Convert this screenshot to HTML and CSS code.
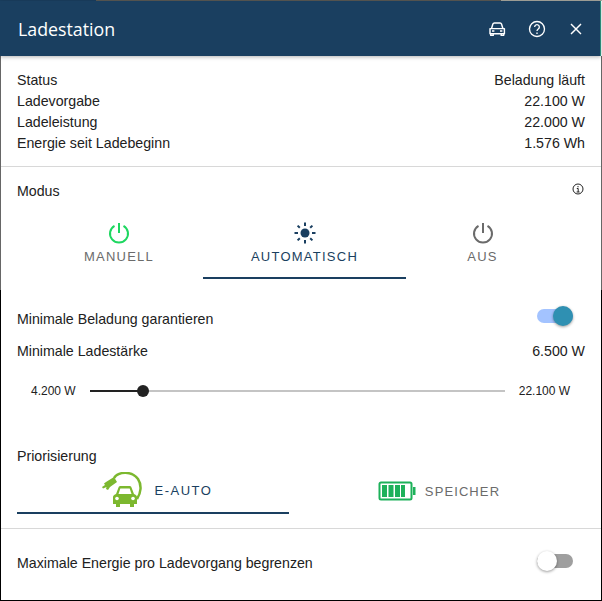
FILE: index.html
```html
<!DOCTYPE html>
<html lang="de">
<head>
    <meta charset="UTF-8">
    <title>Ladestation</title>
    <link rel="stylesheet" href="styles.css">
</head>
<body>
    <div class="topline"></div>
    <div class="dialog">
        <header class="titlebar">
            <h1>Ladestation</h1>
            <div class="actions">
                <svg width="20" height="20" viewBox="0.500 -0.500 25 25" fill="none" stroke="#fff" stroke-width="1.800"><path d="M5 11l1.600-5.200C6.900 5 7.500 4.500 8.400 4.500h7.200c.9 0 1.500.5 1.800 1.300L19 11"/><path d="M3 11.500h18v6.500H3z" stroke-linejoin="round"/><path d="M4 18v2h3v-2M17 18v2h3v-2"/><path d="M5.500 14.500h3M15.500 14.500h3" stroke-width="2"/></svg>
                <svg width="20" height="20" viewBox="0 0 24 24" fill="none" stroke="#fff" stroke-width="1.600"><circle cx="12" cy="12" r="9"/><path d="M9.200 9.600a2.800 2.800 0 1 1 4.300 2.400c-1 .7-1.500 1.200-1.500 2.300"/><path d="M12 16.200v1.800"/></svg>
                <svg width="20" height="20" viewBox="0 0 24 24" fill="none" stroke="#fff" stroke-width="1.700"><path d="M6 6l12 12M18 6L6 18"/></svg>
            </div>
        </header>

        <section class="infos">
            <div class="row"><span>Status</span><span>Beladung läuft</span></div>
            <div class="row"><span>Ladevorgabe</span><span>22.100 W</span></div>
            <div class="row"><span>Ladeleistung</span><span>22.000 W</span></div>
            <div class="row"><span>Energie seit Ladebeginn</span><span>1.576 Wh</span></div>
        </section>

        <section class="modus">
            <div class="row modus-head">
                <span>Modus</span>
                <svg class="info-icon" width="12" height="12" viewBox="0 0 12 12" fill="none" stroke="#222"><circle cx="6" cy="6" r="5"/><path d="M6 3v1.300M4.800 5.500H6.200V9M4.600 9h3"/></svg>
            </div>
            <div class="tabs">
                <div class="tab">
                    <svg width="24" height="24" viewBox="0 0 24 24" fill="none" stroke="#1ed760" stroke-width="2"><path d="M12 2v10"/><path d="M7.500 4.800a9 9 0 1 0 9 0"/></svg>
                    <span>MANUELL</span>
                </div>
                <div class="tab active">
                    <svg width="24" height="24" viewBox="0 0 24 24" fill="none" stroke="#1a3f60" stroke-width="2"><circle cx="12" cy="12" r="4.500" fill="#1a3f60" stroke="none"/><path d="M12 1.500v3.500M12 19v3.500M1.500 12h3.500M19 12h3.500M4.600 4.600l2.200 2.200M17.200 17.200l2.200 2.200M4.600 19.400l2.200-2.200M17.200 6.800l2.200-2.200"/></svg>
                    <span>AUTOMATISCH</span>
                </div>
                <div class="tab">
                    <svg width="24" height="24" viewBox="0 0 24 24" fill="none" stroke="#6b6b6b" stroke-width="2"><path d="M12 2v10"/><path d="M7.500 4.800a9 9 0 1 0 9 0"/></svg>
                    <span>AUS</span>
                </div>
            </div>

            <div class="row minimal">
                <span>Minimale Beladung garantieren</span>
                <div class="switch on"><i></i></div>
            </div>
            <div class="row staerke"><span>Minimale Ladestärke</span><span>6.500 W</span></div>
            <div class="slider-row">
                <span>4.200 W</span>
                <div class="slider"><div class="slider-fill"></div><div class="slider-thumb"></div></div>
                <span>22.100 W</span>
            </div>

            <div class="prio-label">Priorisierung</div>
            <div class="prio-tabs">
                <div class="prio active">
                    <svg width="40" height="36" viewBox="0 0 40 36">
                        <path d="M12 6C17-1 30-1 36 7c4 6 3 14-1 20" fill="none" stroke="#7cb82f" stroke-width="2.500"/>
                        <path d="M3 8l8-5 3 5-7 5-2 3-2-1 .500-2-3.500 1.500-1-1.500 3-2-1-1.500z" fill="#7cb82f" transform="translate(1 2)"/>
                        <path d="M14 22l2.500-6.500c.3-1 1-1.500 2-1.500h9c1 0 1.700.5 2 1.500L32 22c1.500.5 3 1.500 3 3v7h-3v3h-4v-3H18v3h-4v-3h-3v-7c0-1.500 1.500-2.500 3-3z" fill="#7cb82f"/>
                        <path d="M16.500 22l1.800-5.500h9.400l1.800 5.500z" fill="#fff"/>
                        <circle cx="15" cy="26.500" r="1.800" fill="#fff"/><circle cx="31" cy="26.500" r="1.800" fill="#fff"/>
                    </svg>
                    <span>E-AUTO</span>
                </div>
                <div class="prio">
                    <svg width="38" height="20" viewBox="0 0 38 20" fill="#1db15a">
                        <path d="M3 1.500h29A1.500 1.500 0 0 1 33.500 3v14a1.500 1.500 0 0 1-1.500 1.500H3A1.500 1.500 0 0 1 1.500 17V3A1.500 1.500 0 0 1 3 1.500z" fill="none" stroke="#1db15a" stroke-width="2"/>
                        <path d="M4 4h5v12H4zM10.500 4h5v12h-5zM17 4h5v12h-5zM23 4h4v12h-4zM35 6h2.500v8H35z"/>
                    </svg>
                    <span>SPEICHER</span>
                </div>
            </div>
        </section>

        <section class="limit">
            <span>Maximale Energie pro Ladevorgang begrenzen</span>
            <div class="switch"><i></i></div>
        </section>
    </div>
</body>
</html>
```

FILE: styles.css
```css
:root {
    --blue: #1a3f60;
    --text: #212121;
    --grey: #6b6b6b;
    --line: #d8d8d8;
}

html, body {
    margin: 0;
    height: 100%;
}

body {
    /* window edge behind the dialog */
    background: linear-gradient(to bottom, #fff 56px, #666 56px, #666 290px, #000 290px);
    font-family: "Liberation Sans", Arial, sans-serif;
    font-size: 14.200px;
    color: var(--text);
}

.topline {
    height: 1px;
    background: linear-gradient(to right, var(--blue) 96px, #5a5a55 96px, #5a5a55 501px, #a8a8a0 501px);
}

.dialog {
    width: 600px;
    margin-left: 1px;
    height: 599px;
    background-color: #fff;
    display: flex;
    flex-direction: column;
}

.titlebar {
    height: 55px;
    margin-left: -1px;
    background-color: var(--blue);
    border-right: 1px solid #2a8a78;
    color: #fff;
    display: flex;
    align-items: center;
    justify-content: space-between;
    padding: 0 14px 0 18px;
    box-shadow: 0 1px 4px rgba(0, 0, 0, 0.3);
    flex-shrink: 0;
}

h1 {
    margin: 0;
    font-family: "Open Sans", sans-serif;
    font-size: 17.800px;
    font-weight: 400;
}

.actions {
    display: flex;
    gap: 19px;
}

.row {
    display: flex;
    justify-content: space-between;
    align-items: center;
    height: 21px;
}

.infos {
    padding: 13px 16px 13px 16px;
    border-bottom: 1px solid var(--line);
}

.modus {
    padding: 0 16px 14px 16px;
    border-bottom: 1px solid var(--line);
}

.modus-head {
    padding-top: 13px;
}

.info-icon {
    margin-right: 1px;
    margin-bottom: 4px;
}

.tabs {
    display: grid;
    grid-template-columns: 168px 203px 153px;
    margin-top: 6px;
    padding-left: 18px;
}

.tab {
    height: 72px;
    display: flex;
    flex-direction: column;
    align-items: center;
    gap: 4px;
    padding-top: 14px;
    box-sizing: border-box;
    color: var(--grey);
    font-size: 13px;
    letter-spacing: 1.250px;
}

.tab.active {
    color: var(--blue);
    border-bottom: 2px solid var(--blue);
}

.minimal {
    margin-top: 29px;
}

.staerke {
    margin-top: 11px;
}

.switch {
    width: 36px;
    height: 14px;
    margin-right: 12px;
    margin-bottom: 5px;
    border-radius: 7px;
    background-color: #9f9f9f;
    position: relative;
}

.switch i {
    position: absolute;
    left: 0;
    top: -3px;
    width: 20px;
    height: 20px;
    border-radius: 50%;
    background-color: #fff;
    box-shadow: 0 1px 3px rgba(0, 0, 0, 0.4);
}

.switch.on {
    background-color: #a3c3ff;
}

.switch.on i {
    left: auto;
    right: 0;
    background-color: #2f90b2;
}

.slider-row {
    display: flex;
    align-items: center;
    gap: 14px;
    margin-top: 23px;
    padding-left: 14px;
    font-size: 12px;
}

.slider {
    width: 415px;
    height: 2px;
    background-color: #c4c4c4;
    position: relative;
}

.slider-fill {
    width: 53px;
    height: 2px;
    background-color: #222;
}

.slider-thumb {
    position: absolute;
    left: 47px;
    top: -5px;
    width: 12px;
    height: 12px;
    border-radius: 50%;
    background-color: #222;
}

.prio-label {
    margin-top: 50px;
}

.prio-tabs {
    display: grid;
    grid-template-columns: 272px 1fr;
    margin-top: 1px;
}

.prio {
    height: 49px;
    display: flex;
    align-items: center;
    justify-content: center;
    gap: 9px;
    padding: 3px 0 0 4px;
    box-sizing: border-box;
    color: var(--grey);
    font-size: 13px;
    letter-spacing: 1.100px;
}

.prio.active {
    color: var(--blue);
    border-bottom: 2px solid var(--blue);
    gap: 13px;
    padding-left: 8px;
    letter-spacing: 1.500px;
}

.limit {
    flex: 1;
    display: flex;
    align-items: center;
    justify-content: space-between;
    padding: 0 16px 3px 16px;
}
```
